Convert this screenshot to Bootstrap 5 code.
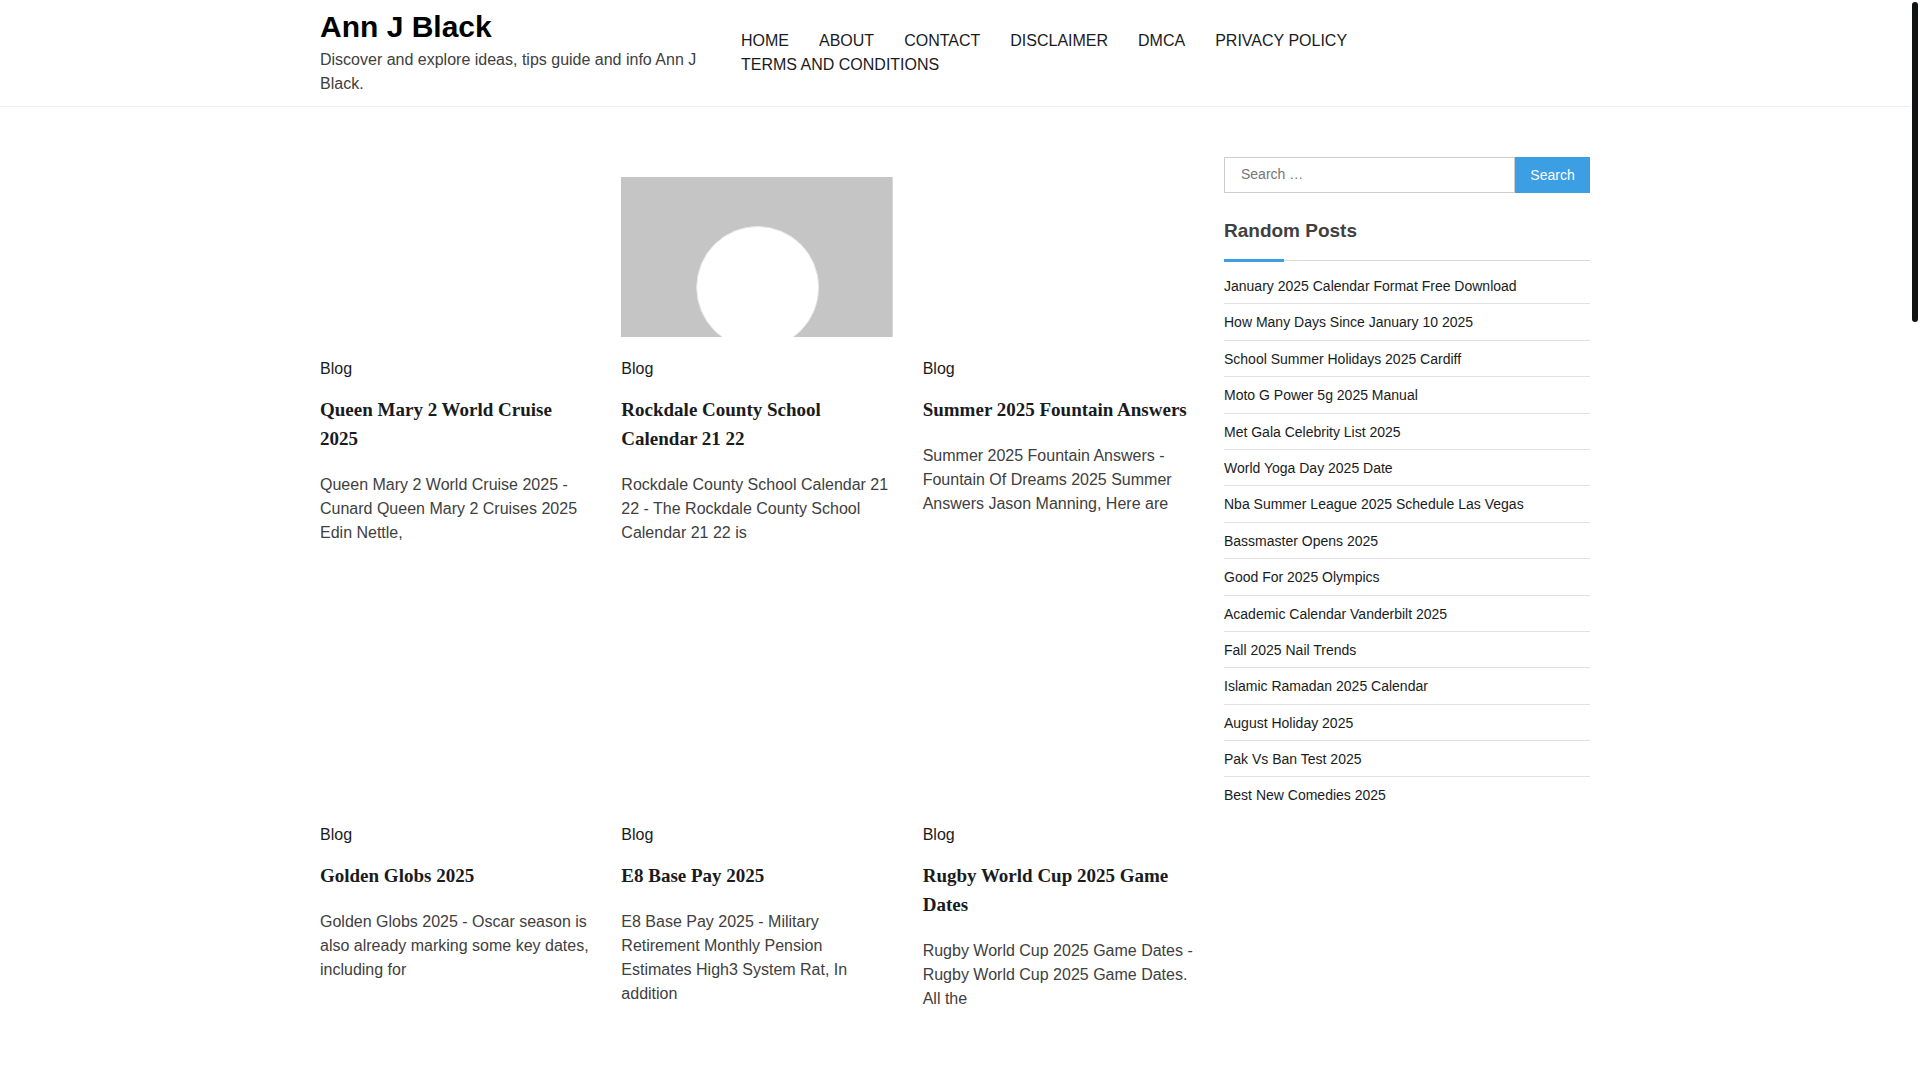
<!DOCTYPE html>
<html lang="en">
<head>
<meta charset="utf-8">
<meta name="viewport" content="width=device-width, initial-scale=1">
<title>Ann J Black</title>
<link href="https://cdn.jsdelivr.net/npm/bootstrap@5.3.0/dist/css/bootstrap.min.css" rel="stylesheet">
<style>
  body { font-family: "Liberation Sans", Arial, sans-serif; font-size: 16px; line-height: 24px; color: #404040; background: #fff; padding-right: 10px; }
  a { color: #191b1d; text-decoration: none; }
  a:hover { color: #3c9ee3; }
  .site-wrap { width: 100%; max-width: 1270px; margin: 0 auto; }
  .site-header { border-bottom: 1px solid #eee; }
  .brand-col { flex: 0 1 391px; padding: 9px 0 10px; }
  .brand-title { font-size: 30px; line-height: 36px; font-weight: 700; margin: 0 0 3px; }
  .brand-title a { color: #000; }
  .main-nav { max-width: 700px; column-gap: 30px; }
  .header-row, .content-row { column-gap: 30px; }
  .sidebar { flex: 0 0 366px; padding-top: 50px; }
  .posts { padding-top: 70px; --bs-gutter-x: 30px; row-gap: 98px; }
  .thumb { height: 160px; }
  .thumb svg { display: block; width: 100%; height: 100%; }
  .post-title { font-family: "Liberation Serif", "Times New Roman", serif; font-size: 19px; line-height: 29px; font-weight: 700; margin: 14px 0 20px; }
  .post-cat { margin-top: 20px; }
  .search-box { font-size: 14px; height: 36px; }
  .search-box input { border: 1px solid #ccc; padding: 0 16px 2px; min-width: 0; color: #404040; }
  .search-box input::placeholder { color: #757575; }
  .search-box button { border: 0; background: #3c9ee3; color: #fff; width: 75px; }
  .widget-title { font-size: 19px; line-height: 29px; font-weight: 700; margin: 23px 0 14px; padding-bottom: 15px; border-bottom: 1px solid #d8d8d8; position: relative; }
  .widget-title::after { content: ""; position: absolute; left: 0; bottom: -2px; width: 60px; height: 3px; background: #3c9ee3; }
  .post-list { font-size: 14px; line-height: 1.6; }
  .post-list li { padding: 7px 0 6px; border-bottom: 1px solid #e1e1e1; }
  .post-list li:first-child { padding-top: 0; }
  .post-list li:last-child { border-bottom: 0; }
  .scroll-thumb { position: fixed; top: 2px; right: 2px; width: 6px; height: 320px; border-radius: 3px; background: #101213; }
  @media (max-width: 991px) {
    .header-row, .content-row { flex-wrap: wrap; padding: 0 15px; }
    .sidebar { flex: 1 1 100%; }
  }
</style>
</head>
<body>
<header class="site-header">
  <div class="site-wrap header-row d-flex align-items-center">
    <div class="brand-col">
      <h1 class="brand-title"><a href="#">Ann J Black</a></h1>
      <p class="mb-0">Discover and explore ideas, tips guide and info Ann J Black.</p>
    </div>
    <nav aria-label="Primary">
      <ul class="main-nav list-unstyled d-flex flex-wrap mb-0">
        <li><a href="#">HOME</a></li>
        <li><a href="#">ABOUT</a></li>
        <li><a href="#">CONTACT</a></li>
        <li><a href="#">DISCLAIMER</a></li>
        <li><a href="#">DMCA</a></li>
        <li><a href="#">PRIVACY POLICY</a></li>
        <li><a href="#">TERMS AND CONDITIONS</a></li>
      </ul>
    </nav>
  </div>
</header>

<div class="site-wrap content-row d-flex align-items-start">
  <main class="flex-grow-1">
    <div class="posts row row-cols-1 row-cols-md-3">
      <article class="col">
        <div class="thumb"></div>
        <div class="post-cat"><a href="#">Blog</a></div>
        <h2 class="post-title"><a href="#">Queen Mary 2 World Cruise 2025</a></h2>
        <p class="mb-0">Queen Mary 2 World Cruise 2025 - Cunard Queen Mary 2 Cruises 2025 Edin Nettle,</p>
      </article>
      <article class="col">
        <div class="thumb">
          <svg viewBox="0 0 272 160" preserveAspectRatio="xMidYMid slice" aria-hidden="true">
            <rect width="272" height="160" fill="#c5c5c5"/>
            <circle cx="137" cy="110.500" r="61" fill="#fff" stroke="#e6e6e6" stroke-width="1"/>
          </svg>
        </div>
        <div class="post-cat"><a href="#">Blog</a></div>
        <h2 class="post-title"><a href="#">Rockdale County School Calendar 21 22</a></h2>
        <p class="mb-0">Rockdale County School Calendar 21 22 - The Rockdale County School Calendar 21 22 is</p>
      </article>
      <article class="col">
        <div class="thumb"></div>
        <div class="post-cat"><a href="#">Blog</a></div>
        <h2 class="post-title"><a href="#">Summer 2025 Fountain Answers</a></h2>
        <p class="mb-0">Summer 2025 Fountain Answers - Fountain Of Dreams 2025 Summer Answers Jason Manning, Here are</p>
      </article>
      <article class="col">
        <div class="thumb"></div>
        <div class="post-cat"><a href="#">Blog</a></div>
        <h2 class="post-title"><a href="#">Golden Globs 2025</a></h2>
        <p class="mb-0">Golden Globs 2025 - Oscar season is also already marking some key dates, including for</p>
      </article>
      <article class="col">
        <div class="thumb"></div>
        <div class="post-cat"><a href="#">Blog</a></div>
        <h2 class="post-title"><a href="#">E8 Base Pay 2025</a></h2>
        <p class="mb-0">E8 Base Pay 2025 - Military Retirement Monthly Pension Estimates High3 System Rat, In addition</p>
      </article>
      <article class="col">
        <div class="thumb"></div>
        <div class="post-cat"><a href="#">Blog</a></div>
        <h2 class="post-title"><a href="#">Rugby World Cup 2025 Game Dates</a></h2>
        <p class="mb-0">Rugby World Cup 2025 Game Dates - Rugby World Cup 2025 Game Dates. All the</p>
      </article>
    </div>
  </main>

  <aside class="sidebar">
    <form class="search-box d-flex" role="search">
      <input class="flex-grow-1" type="search" aria-label="Search for:" placeholder="Search …">
      <button type="button">Search</button>
    </form>
    <h2 class="widget-title">Random Posts</h2>
    <ul class="post-list list-unstyled mb-0">
      <li><a href="#">January 2025 Calendar Format Free Download</a></li>
      <li><a href="#">How Many Days Since January 10 2025</a></li>
      <li><a href="#">School Summer Holidays 2025 Cardiff</a></li>
      <li><a href="#">Moto G Power 5g 2025 Manual</a></li>
      <li><a href="#">Met Gala Celebrity List 2025</a></li>
      <li><a href="#">World Yoga Day 2025 Date</a></li>
      <li><a href="#">Nba Summer League 2025 Schedule Las Vegas</a></li>
      <li><a href="#">Bassmaster Opens 2025</a></li>
      <li><a href="#">Good For 2025 Olympics</a></li>
      <li><a href="#">Academic Calendar Vanderbilt 2025</a></li>
      <li><a href="#">Fall 2025 Nail Trends</a></li>
      <li><a href="#">Islamic Ramadan 2025 Calendar</a></li>
      <li><a href="#">August Holiday 2025</a></li>
      <li><a href="#">Pak Vs Ban Test 2025</a></li>
      <li><a href="#">Best New Comedies 2025</a></li>
    </ul>
  </aside>
</div>
<div class="scroll-thumb" aria-hidden="true"></div>
</body>
</html>
